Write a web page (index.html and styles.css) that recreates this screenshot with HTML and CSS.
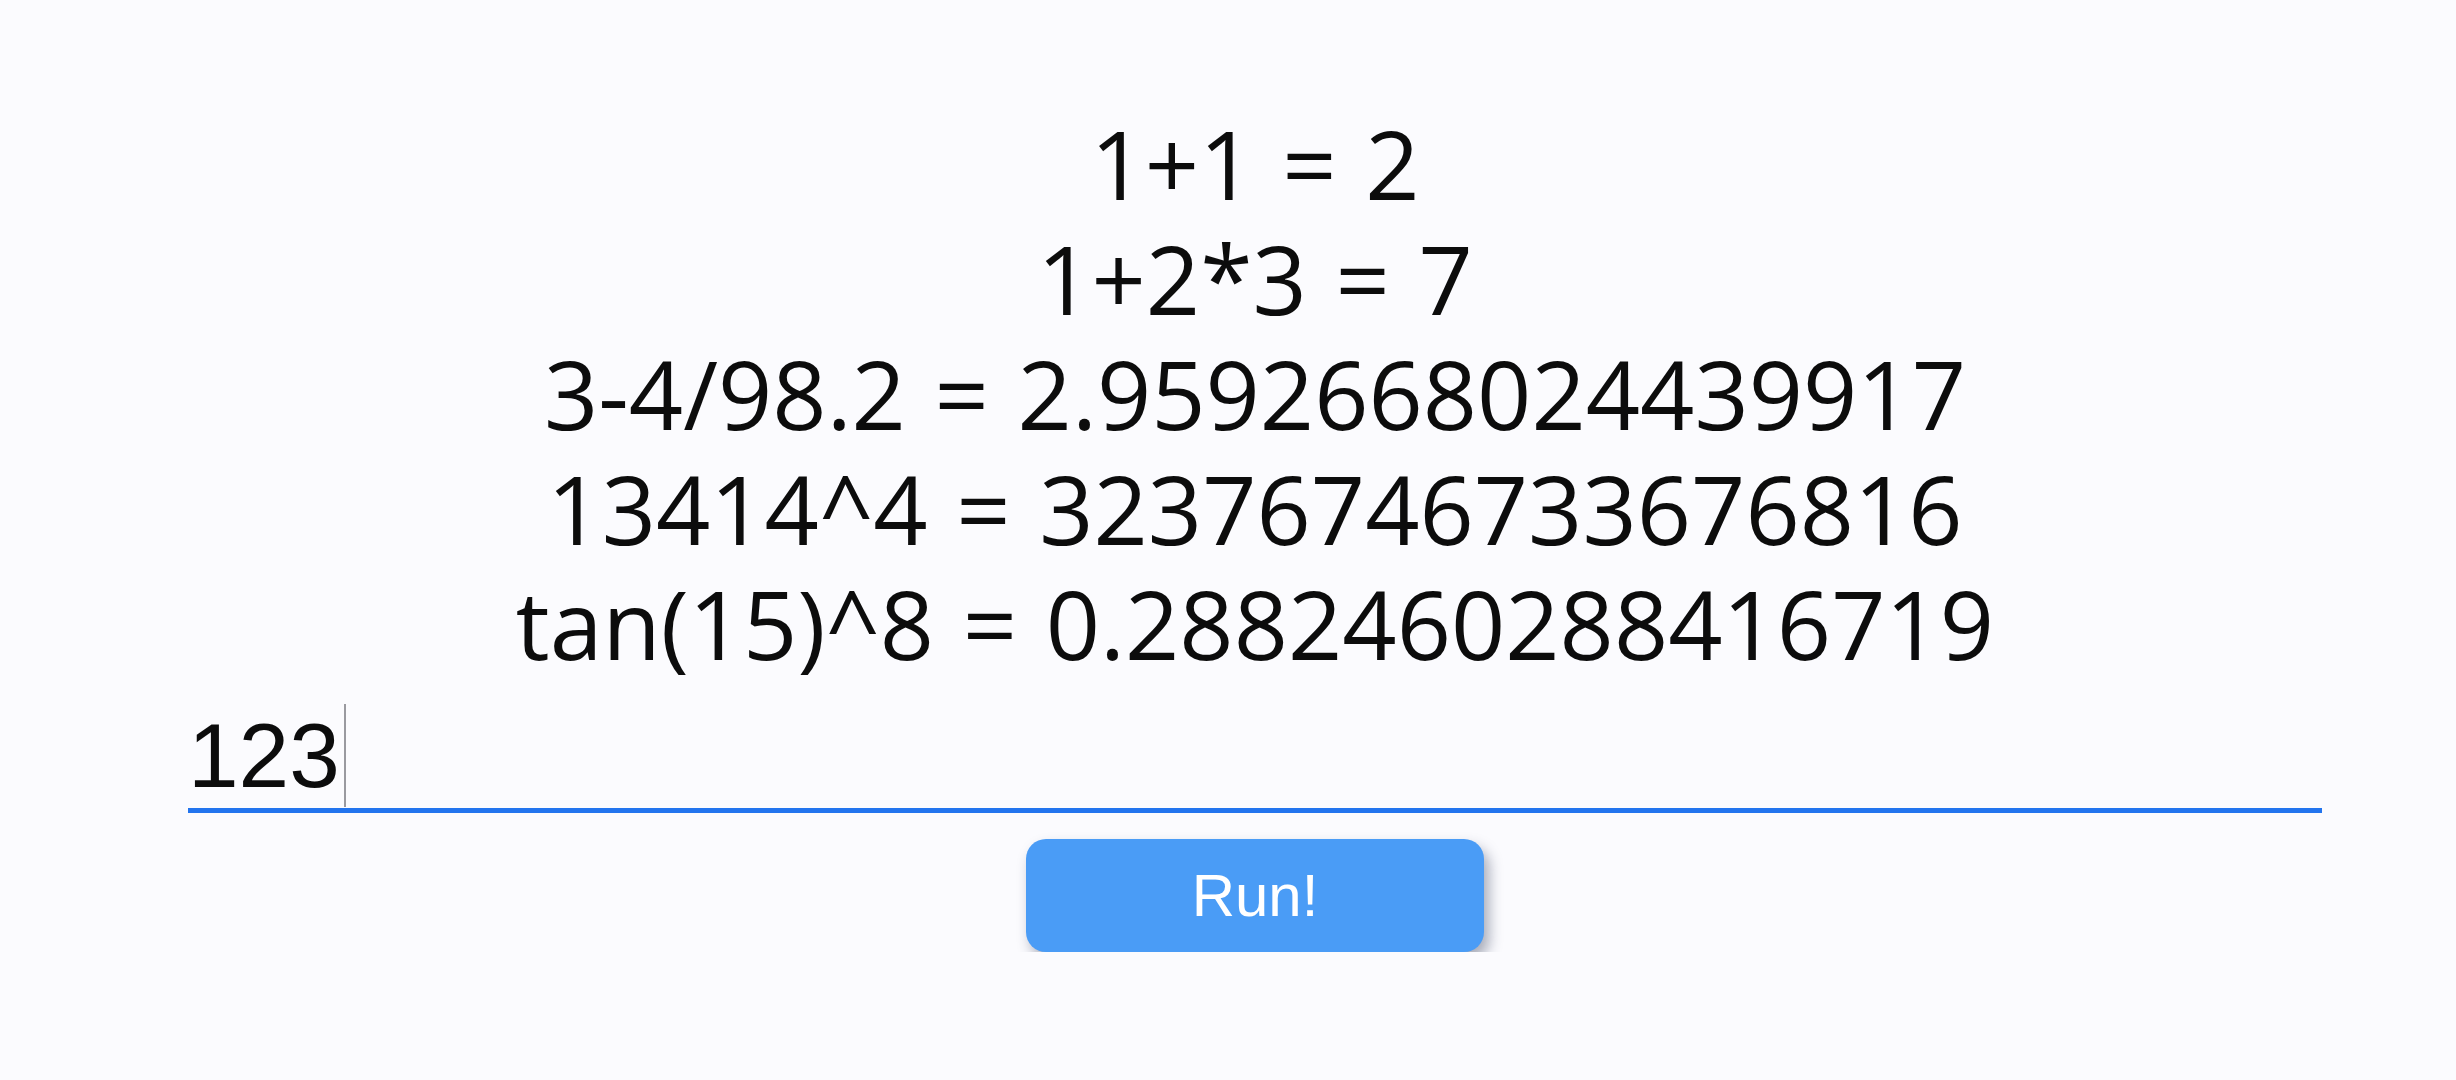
FILE: index.html
```html
<!DOCTYPE html>
<html lang="en">
<head>
<meta charset="utf-8">
<title>Calculator</title>
<link rel="stylesheet" href="styles.css">
</head>
<body>
<main class="app">
  <div class="results">
    <div class="line">1+1 = 2</div>
    <div class="line">1+2*3 = 7</div>
    <div class="line">3-4/98.2 = 2.9592668024439917</div>
    <div class="line">13414^4 = 32376746733676816</div>
    <div class="line">tan(15)^8 = 0.2882460288416719</div>
  </div>
  <div class="input">123<span class="caret"></span></div>
  <div class="actions">
    <button class="run" type="button">Run!</button>
  </div>
</main>
</body>
</html>
```
FILE: styles.css
```css
html, body {
  margin: 0;
  padding: 0;
  background: #fbfbfe;
}

.app {
  padding: 106px 134px 0 188px;
  display: flex;
  flex-direction: column;
}

.results {
  text-align: center;
  font-family: "Open Sans", "Noto Sans", sans-serif;
  font-size: 95px;
  line-height: 115px;
  color: #0c0c0c;
}

.line {
  white-space: nowrap;
  word-spacing: 4px;
}

.input {
  margin-top: 22px;
  font-family: "Liberation Sans", Arial, sans-serif;
  font-size: 91px;
  line-height: 105px;
  height: 105px;
  color: #0c0c0c;
  border-bottom: 5px solid #2274ee;
  display: flex;
  align-items: flex-start;
}

.caret {
  display: inline-block;
  width: 2px;
  height: 103px;
  margin-top: 1px;
  margin-left: 4px;
  background: #9a9aa0;
}

.actions {
  display: flex;
  justify-content: center;
  margin-top: 26px;
}

.run {
  width: 458px;
  height: 113px;
  border: none;
  border-radius: 20px;
  background: #4a9cf6;
  color: #ffffff;
  font-family: "Liberation Sans", Arial, sans-serif;
  font-size: 60px;
  box-shadow: 5px 8px 14px rgba(40, 50, 80, 0.4);
  display: flex;
  align-items: center;
  justify-content: center;
  padding: 0;
}
```
